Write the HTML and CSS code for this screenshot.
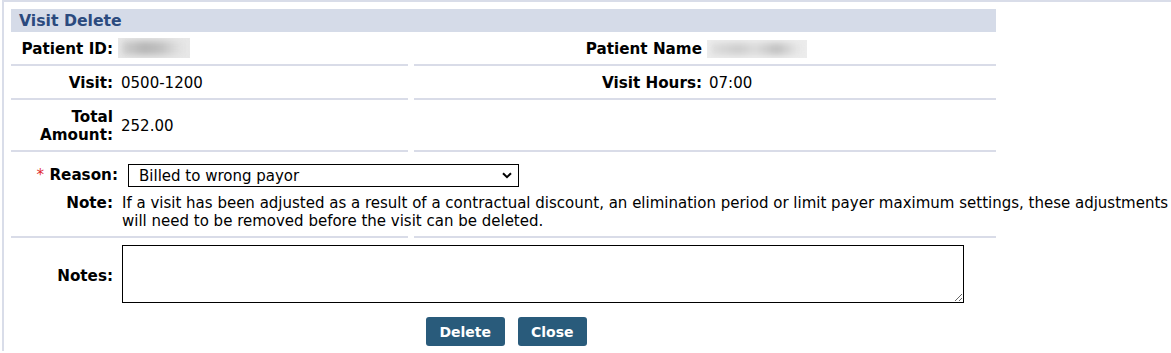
FILE: index.html
```html
<!DOCTYPE html>
<html>
<head>
<meta charset="utf-8">
<title>Visit Delete</title>
<link rel="stylesheet" href="styles.css">
</head>
<body>
<div class="frame">
  <div class="title">Visit Delete</div>
  <div class="info">
    <div class="cell left"><span class="lbl">Patient ID:</span><span class="val"><span class="blur blur-id"></span></span></div>
    <div class="cell right"><span class="lbl">Patient Name</span><span class="val"><span class="blur blur-name"></span></span></div>
    <div class="cell left"><span class="lbl">Visit:</span><span class="val">0500-1200</span></div>
    <div class="cell right"><span class="lbl">Visit Hours:</span><span class="val">07:00</span></div>
    <div class="cell left tall"><span class="lbl">Total Amount:</span><span class="val">252.00</span></div>
    <div class="cell right tall"><span class="lbl"></span><span class="val"></span></div>
  </div>
  <div class="reason">
    <div class="form-row reason-row">
      <label class="lbl"><span class="req">*</span> Reason:</label>
      <div class="select-wrap">
        <select class="select">
          <option>Billed to wrong payor</option>
        </select>
        <svg class="chev" width="10" height="7" viewBox="0 0 10 7"><path d="M1 1.2 L5 5.2 L9 1.2" fill="none" stroke="#000" stroke-width="2"/></svg>
      </div>
    </div>
    <div class="form-row note-row">
      <span class="lbl">Note:</span>
      <span class="note-text">If a visit has been adjusted as a result of a contractual discount, an elimination period or limit payer maximum settings, these adjustments will need to be removed before the visit can be deleted.</span>
    </div>
  </div>
  <div class="rule"><span></span><span></span></div>
  <div class="form-row notes-row">
    <label class="lbl">Notes:</label>
    <textarea class="notes"></textarea>
  </div>
  <div class="actions">
    <button class="btn">Delete</button>
    <button class="btn">Close</button>
  </div>
</div>
</body>
</html>
```
FILE: styles.css
```css
html, body {
  margin: 0;
  padding: 0;
  background: #fff;
}
body {
  font-family: "DejaVu Sans", Verdana, sans-serif;
  font-size: 15px;
  line-height: 18px;
  color: #000;
}
.frame {
  margin-left: 2px;
  border-left: 2px solid #d9dde9;
  border-top: 2px solid #d9dde9;
  padding: 7px 0 0 7px;
  height: 351px;
  box-sizing: border-box;
}
.title {
  width: 985px;
  height: 23px;
  box-sizing: border-box;
  padding-left: 8px;
  background: #d5dbe8;
  color: #2b4a7e;
  font-weight: bold;
  font-size: 15.7px;
  line-height: 23px;
}
.info {
  display: grid;
  grid-template-columns: 397px 582px;
  column-gap: 6px;
  width: 985px;
}
.cell {
  display: grid;
  align-items: center;
  padding: 8px 0 6px;
  height: 18px;
  border-bottom: 2px solid #d9dce8;
}
.cell.tall {
  height: 36px;
}
.cell.left {
  grid-template-columns: 102px 1fr;
  column-gap: 8px;
}
.cell.right {
  grid-template-columns: 288px 1fr;
  column-gap: 7px;
}
.lbl {
  font-weight: bold;
  text-align: right;
  font-size: 15.2px;
}
.val {
  height: 18px;
  display: flex;
  align-items: center;
}
.blur {
  display: block;
  position: relative;
  overflow: hidden;
  flex: none;
}
.blur-id {
  width: 72px;
  height: 20px;
  margin-left: -3px;
  margin-top: -2px;
  background: #e8e8e8;
}
.blur-id::after,
.blur-name::after {
  content: "";
  position: absolute;
  inset: 3px 4px;
  filter: blur(3px);
}
.blur-id::after {
  background: linear-gradient(90deg, #cecece, #b6b6b6 35%, #c0c0c0 60%, #e2e2e2 90%);
}
.blur-name {
  width: 100px;
  height: 18px;
  margin-left: -2px;
  background: #ededed;
}
.blur-name::after {
  background: linear-gradient(90deg, #dddddd, #cdcdcd 30%, #dcdcdc 48%, #c0c0c0 72%, #e8e8e8 95%);
}
.reason {
  padding: 12px 0 7px;
}
.form-row {
  display: grid;
  grid-template-columns: 102px 1fr;
  column-gap: 9px;
  align-items: center;
}
.reason-row {
  grid-template-columns: 107px 1fr;
  column-gap: 10px;
}
.reason-row .lbl {
  margin-top: -1px;
}
.req {
  color: #e0282e;
  font-weight: normal;
}
.select-wrap {
  position: relative;
  width: 391px;
  height: 23px;
}
.select {
  appearance: none;
  -webkit-appearance: none;
  width: 391px;
  height: 23px;
  box-sizing: border-box;
  margin: 0;
  border: 1px solid #000;
  border-radius: 0;
  background: #fff;
  padding: 0 0 0 10px;
  font-family: inherit;
  font-size: 15px;
  color: #000;
}
.chev {
  position: absolute;
  right: 7px;
  top: 8px;
  pointer-events: none;
}
.note-row {
  margin-top: 6px;
  align-items: start;
}
.note-row .lbl,
.note-text {
  padding-top: 1px;
  margin-bottom: -1px;
}
.rule {
  display: grid;
  grid-template-columns: 397px 582px;
  column-gap: 6px;
  width: 985px;
}
.rule span {
  height: 2px;
  background: #d9dce8;
}
.notes-row {
  padding-top: 7px;
}
.notes-row .lbl {
  padding-top: 3px;
}
.notes {
  width: 842px;
  height: 58px;
  box-sizing: border-box;
  margin: 0;
  border: 1px solid #000;
  border-radius: 0;
  font-family: inherit;
  font-size: 15px;
  display: block;
}
.actions {
  display: flex;
  justify-content: center;
  gap: 13px;
  width: 985px;
  box-sizing: border-box;
  padding-left: 6px;
  margin-top: 14px;
}
.btn {
  height: 29px;
  padding: 0 13.5px;
  border: none;
  border-radius: 3px;
  background: #295b7b;
  color: #fff;
  font-family: inherit;
  font-weight: bold;
  font-size: 14px;
}
```
